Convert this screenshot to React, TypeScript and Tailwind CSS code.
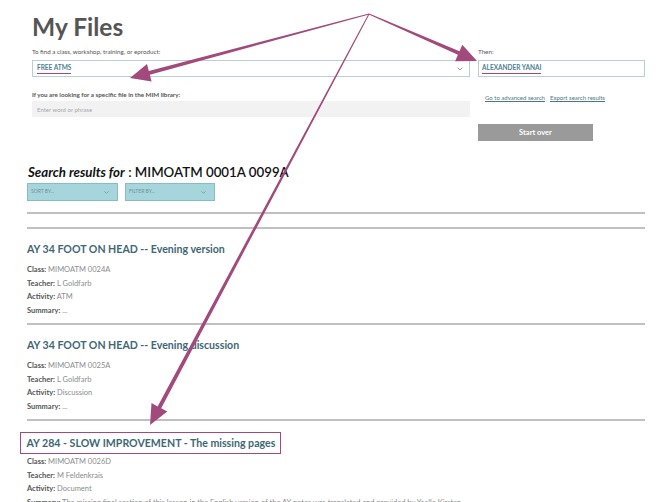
import { ChevronDown } from 'lucide-react'

const ACCENT = '#a24a7b'

type ResultProps = {
  title: string
  cls: string
  teacher: string
  activity: string
  summary: string
  boxed?: boolean
}

function Detail({ label, value }: { label: string; value: string }) {
  return (
    <div className="h-[13.67px] leading-[13.67px] text-[7.5px] whitespace-nowrap">
      <span className="font-bold text-[#555]">{label}:</span>{' '}
      <span className="text-[#8c8c8c]">{value}</span>
    </div>
  )
}

function Result({ title, cls, teacher, activity, summary, boxed }: ResultProps) {
  return (
    <div className="h-[94px]">
      <div className={boxed ? 'h-[32px] pt-[8px]' : 'h-[32px] pt-[12px]'}>
        {boxed ? (
          <div className="inline-block -ml-[7px] pl-[5.5px] pr-[5px] py-[2px] border-[1.5px] border-[#a24a7b]">
            <h3 className="text-[10.6px] leading-[16px] font-bold text-[#3e6775] whitespace-nowrap">{title}</h3>
          </div>
        ) : (
          <h3 className="text-[10.6px] leading-[16px] font-bold text-[#3e6775] whitespace-nowrap">{title}</h3>
        )}
      </div>
      <div className="mt-[2px]">
        <Detail label="Class" value={cls} />
        <Detail label="Teacher" value={teacher} />
        <Detail label="Activity" value={activity} />
        <Detail label="Summary" value={summary} />
      </div>
    </div>
  )
}

function Arrows() {
  return (
    <svg className="absolute inset-0 pointer-events-none" width="672" height="502" viewBox="0 0 672 502">
      <polygon
        fill={ACCENT}
        points="130,78 147,64.1 148.8,70.9 368.9,13.5 369.1,14.5 149.8,74.7 151.6,81.5"
      />
      <polygon
        fill={ACCENT}
        points="477,61 462.3,44.7 459.5,51.2 369.2,13.54 368.8,14.46 457.9,54.8 455.1,61.3"
      />
      <polygon
        fill={ACCENT}
        points="150,425 167.3,411.5 161.2,408.2 369.44,14.24 368.56,13.76 157.6,406.4 151.5,403.1"
      />
    </svg>
  )
}

export default function App() {
  return (
    <div
      className="relative w-[672px] h-[502px] overflow-hidden bg-white"
      style={{ fontFamily: 'Lato, "Open Sans", "Liberation Sans", sans-serif' }}
    >
      <div className="px-[27px]">
        {/* search form */}
        <div className="pl-[5px] pt-[11px]">
          <h1 className="text-[24.5px] leading-[32px] font-bold text-[#555]">My Files</h1>
          <div className="flex gap-[8px] mt-[5px]">
            <div className="w-[438px]">
              <div className="text-[6.25px] leading-[8px] text-[#555]">
                To find a class, workshop, training, or eproduct:
              </div>
              <div className="mt-[4px] h-[17px] border border-[#b9cfd4] flex items-center justify-between pl-[4px] pr-[5px]">
                <span className="inline-block leading-[10px] text-[6.5px] font-bold text-[#4f7f8e] border-b-[1.5px] border-[#a24a7b]">
                  FREE ATMS
                </span>
                <ChevronDown size={8} strokeWidth={2.5} className="text-[#6b8a93]" />
              </div>
              <div className="mt-[14px] text-[6.25px] leading-[8px] text-[#555] font-bold">
                If you are looking for a specific file in the MIM library:
              </div>
              <div className="mt-[2px] h-[16px] bg-[#f2f2f2] rounded-[1px] pl-[5px] flex items-center text-[6px] text-[#a8a8a8]">
                Enter word or phrase
              </div>
            </div>
            <div className="w-[167px]">
              <div className="text-[6.25px] leading-[8px] text-[#555]">Then:</div>
              <div className="mt-[4px] h-[17px] border border-[#b9cfd4] flex items-center pl-[3px]">
                <span className="inline-block leading-[10px] text-[6.5px] font-bold text-[#4f7f8e] border-b-[1.5px] border-[#a24a7b]">
                  ALEXANDER YANAI
                </span>
              </div>
              <div className="mt-[17px] pl-[7px] flex gap-[5px] text-[6px] leading-[8px] text-[#4d7785] underline">
                <span>Go to advanced search</span>
                <span>Export search results</span>
              </div>
              <button className="mt-[22px] w-[115px] h-[17px] bg-[#9a9a9a] text-white text-[7.5px] font-bold flex items-center justify-center">
                Start over
              </button>
            </div>
          </div>
        </div>

        {/* results header */}
        <div className="pl-[1px] mt-[22px] text-[13.3px] leading-[18px] text-[#111] whitespace-nowrap">
          <span className="italic font-bold">Search results for</span>{' '}
          <span className="font-semibold">: MIMOATM 0001A 0099A</span>
        </div>
        <div className="flex gap-[7px] mt-[2px]">
          <div className="w-[91px] h-[18px] bg-[#a6d5dc] border border-[#86bcc6] flex items-center justify-between pl-[3px] pr-[7px]">
            <span className="text-[5px] text-[#6f939b]">SORT BY...</span>
            <ChevronDown size={7} strokeWidth={2.5} className="text-[#6f939b]" />
          </div>
          <div className="w-[90px] h-[18px] bg-[#a6d5dc] border border-[#86bcc6] flex items-center justify-between pl-[3px] pr-[7px]">
            <span className="text-[5px] text-[#6f939b]">FILTER BY...</span>
            <ChevronDown size={7} strokeWidth={2.5} className="text-[#6f939b]" />
          </div>
        </div>
        <div className="mt-[11px] h-[2px] bg-[#c0c0c0]" />
        <div className="mt-[13px] h-[2px] bg-[#c0c0c0]" />

        <Result
          title="AY 34 FOOT ON HEAD -- Evening version"
          cls="MIMOATM 0024A"
          teacher="L Goldfarb"
          activity="ATM"
          summary="..."
        />
        <div className="h-[2px] bg-[#c0c0c0]" />
        <Result
          title="AY 34 FOOT ON HEAD -- Evening discussion"
          cls="MIMOATM 0025A"
          teacher="L Goldfarb"
          activity="Discussion"
          summary="..."
        />
        <div className="h-[2px] bg-[#c0c0c0]" />
        <Result
          boxed
          title="AY 284 - SLOW IMPROVEMENT - The missing pages"
          cls="MIMOATM 0026D"
          teacher="M Feldenkrais"
          activity="Document"
          summary="The missing final section of this lesson in the English version of the AY notes was translated and provided by Yaelle Kirsten."
        />
      </div>
      <Arrows />
    </div>
  )
}
